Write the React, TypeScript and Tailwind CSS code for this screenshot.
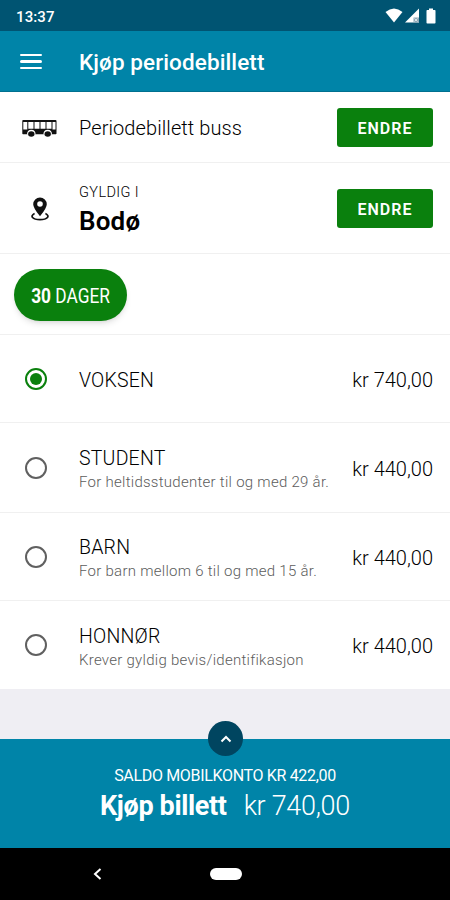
import React from "react";

interface Passenger {
  id: string;
  name: string;
  info?: string;
  price: string;
  rowClass: string;
}

const passengers: Passenger[] = [
  { id: "adult", name: "VOKSEN", price: "kr 740,00", rowClass: "h-[88px] border-b" },
  { id: "student", name: "STUDENT", info: "For heltidsstudenter til og med 29 år.", price: "kr 440,00", rowClass: "h-[90px] border-b" },
  { id: "child", name: "BARN", info: "For barn mellom 6 til og med 15 år.", price: "kr 440,00", rowClass: "h-[88px] border-b" },
  { id: "senior", name: "HONNØR", info: "Krever gyldig bevis/identifikasjon", price: "kr 440,00", rowClass: "h-[88px]" },
];

const StatusBar: React.FC = () => (
  <div className="h-[31px] bg-[#005472] flex items-center justify-between pl-4 pr-[14px] text-white">
    <span className="text-[15px] leading-none font-medium mt-[3px] tracking-[0.1px]">13:37</span>
    <div className="flex items-center">
      <svg width="18" height="15" viewBox="0 0 18 15">
        <path d="M0.5 4Q9-3 17.5 4L9 14.5Z" fill="#fff" />
      </svg>
      <svg className="ml-[2px]" width="15" height="15" viewBox="0 0 15 15">
        <path d="M14 0.5V14.5H0Z" fill="#fff" />
        <path d="M8.5 9.5H14v5H8.5z" fill="#8fa9b7" />
        <path d="M9.5 10.5l3 3M12.5 10.5l-3 3" stroke="#d9e3e8" strokeWidth="1" />
      </svg>
      <svg className="ml-[6px]" width="10" height="16" viewBox="0 0 10 16">
        <path d="M3 0.5h4V2h1.7q.8 0 .8.8v11.9q0 .8-.8.8H1.3q-.8 0-.8-.8V2.8Q.5 2 1.3 2H3Z" fill="#fff" />
      </svg>
    </div>
  </div>
);

const BusIcon: React.FC = () => (
  <svg className="mt-[2px]" width="35" height="17" viewBox="0 0 35 17">
    <path d="M1 0h32.5q1 0 1 1v12.5q0 .7-.7.7H1q-.7 0-.7-.7V1Q.3 0 1 0Z" fill="#111" />
    <path
      d="M1.3 2h4v7.5h-4zM6.3 2h5.2v6.7H6.3zM12.5 2h5v6.7h-5zM18.5 2h5v6.7h-5zM24.5 2h5v6.7h-5zM30.5 2h3v7.5h-3z"
      fill="#fff"
    />
    <path d="M5 14.5q0-4.7 4.3-4.7t4.3 4.7zM21.4 14.5q0-4.7 4.3-4.7t4.3 4.7z" fill="#fff" />
    <ellipse cx="9.3" cy="14" rx="3.2" ry="2.7" fill="#111" />
    <ellipse cx="25.7" cy="14" rx="3.2" ry="2.7" fill="#111" />
  </svg>
);

const PinIcon: React.FC = () => (
  <svg className="mt-[2px]" width="18" height="24" viewBox="0 0 18 24">
    <path d="M9 19.3Q2.2 11 2.2 7.2a6.8 6.8 0 0 1 13.6 0Q15.8 11 9 19.3Z" fill="#111" />
    <circle cx="9" cy="7" r="2.8" fill="#fff" />
    <path d="M3.6 16.5C-1.5 19 1.5 22.7 9 22.7s10.5-3.7 5.4-6.2" fill="none" stroke="#111" strokeWidth="1.7" />
  </svg>
);

const ChangeButton: React.FC = () => (
  <button className="w-24 h-[39px] pt-[3px] rounded-[3px] bg-[#0a800d] text-white text-[16px] font-semibold tracking-[1px]">ENDRE</button>
);

const PassengerRow: React.FC<{ passenger: Passenger; selected: boolean }> = ({ passenger, selected }) => (
  <div className={`flex items-center pl-[24.5px] pr-[17px] border-[#f0f0f0] ${passenger.rowClass}`}>
    <span
      className={
        selected
          ? "size-[22px] rounded-full border-2 border-[#0a800d] flex items-center justify-center"
          : "size-[22px] rounded-full border-2 border-[#606060]"
      }
    >
      {selected && <span className="size-3 rounded-full bg-[#0a800d]" />}
    </span>
    <div className="ml-[32.5px] flex-1 pt-[4px]">
      <div className="text-[19.5px] leading-[24px] font-light text-black mt-[1px] tracking-[0.2px]">{passenger.name}</div>
      {passenger.info && (
        <div className="text-[15px] leading-[22px] font-light text-[#5c5c5c] whitespace-nowrap tracking-[0.27px]">{passenger.info}</div>
      )}
    </div>
    <div className="text-[20px] leading-[24px] mt-[2px] font-light text-black whitespace-nowrap">{passenger.price}</div>
  </div>
);

const App: React.FC = () => {
  const selectedId = "adult";

  return (
    <div className="w-[450px] h-[900px] flex flex-col bg-white overflow-hidden font-['Roboto',sans-serif]">
      <StatusBar />
      <header className="h-[61px] bg-[#0084a8] border-b border-[#00708f] flex items-center pl-5 text-white">
        <div className="w-[22px] flex flex-col gap-1 mt-[1px]">
          <span className="h-[2.5px] rounded-full bg-white" />
          <span className="h-[2.5px] rounded-full bg-white" />
          <span className="h-[2.5px] rounded-full bg-white" />
        </div>
        <h1 className="ml-[37px] text-[22.5px] font-medium mt-[3px] tracking-[0.1px]">Kjøp periodebillett</h1>
      </header>

      <div className="h-[71px] border-b border-[#f0f0f0] flex items-center pl-[22px] pr-[17px]">
        <BusIcon />
        <span className="ml-[22px] mt-[2px] flex-1 text-[20px] font-light text-black tracking-[0.08px]">Periodebillett buss</span>
        <ChangeButton />
      </div>

      <div className="h-[91px] border-b border-[#f0f0f0] flex items-center pl-[31px] pr-[17px]">
        <PinIcon />
        <div className="ml-[30px] mt-[6px] flex-1">
          <div className="text-[14.5px] leading-[20px] font-light text-black tracking-[0.4px]">GYLDIG I</div>
          <div className="text-[26px] leading-[36px] font-semibold text-black tracking-[0.2px]">Bodø</div>
        </div>
        <ChangeButton />
      </div>

      <div className="h-[81px] border-b border-[#f0f0f0] flex items-center pt-px pl-[14px]">
        <button className="w-[113px] h-[52px] rounded-full bg-[#0a800d] text-white text-[20px] shadow-md flex items-center justify-center">
          <span className="whitespace-nowrap scale-x-[0.865] mt-[2px]">
            <b>30</b> DAGER
          </span>
        </button>
      </div>

      {passengers.map((passenger) => (
        <PassengerRow key={passenger.id} passenger={passenger} selected={passenger.id === selectedId} />
      ))}

      <div className="h-[50px] bg-[#efeef3]" />

      <footer className="relative h-[109px] bg-[#0084a8] text-white text-center pt-[26px]">
        <span className="absolute -top-[18px] left-[208px] size-[35px] rounded-full bg-[#004560] flex items-center justify-center">
          <svg width="12" height="8" viewBox="0 0 12 8">
            <path d="M1.5 6.5 6 2l4.5 4.5" fill="none" stroke="#fff" strokeWidth="2" />
          </svg>
        </span>
        <div className="text-[16px] leading-[22px] tracking-[-0.33px]">SALDO MOBILKONTO KR 422,00</div>
        <div className="flex justify-center items-baseline text-[27px] leading-[38px]">
          <span className="font-bold tracking-[-0.35px]">Kjøp billett</span>
          <span className="ml-[17px] font-light tracking-[-0.3px]">kr 740,00</span>
        </div>
      </footer>

      <nav className="h-[52px] bg-black flex items-center pl-[93px]">
        <svg width="9" height="12" viewBox="0 0 9 12">
          <path d="M7.5 1 2 6l5.5 5" fill="none" stroke="#fff" strokeWidth="2" />
        </svg>
        <span className="ml-[108px] w-8 h-3 rounded-full bg-white" />
      </nav>
    </div>
  );
};

export default App;
